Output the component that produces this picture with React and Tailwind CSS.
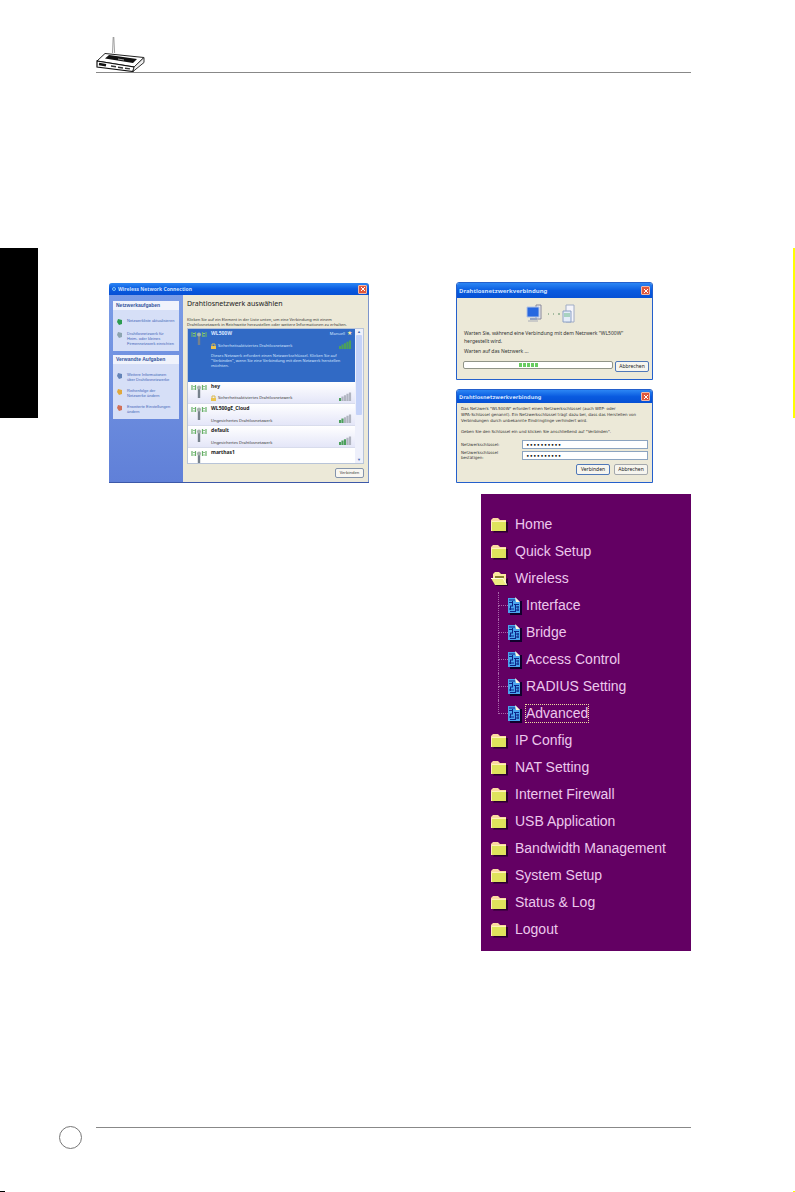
import { clsx } from "clsx";

const networks = [
  { name: "hey", info: "Sicherheitsaktiviertes Drahtlosnetzwerk", secure: true, level: 1 },
  { name: "WL500gE_Cloud", info: "Ungesichertes Drahtlosnetzwerk", level: 2 },
  { name: "default", info: "Ungesichertes Drahtlosnetzwerk", level: 3 },
];

const wirelessPages = ["Interface", "Bridge", "Access Control", "RADIUS Setting", "Advanced"];

const menuItems = [
  { label: "Home" },
  { label: "Quick Setup" },
  { label: "Wireless", children: wirelessPages },
  { label: "IP Config" },
  { label: "NAT Setting" },
  { label: "Internet Firewall" },
  { label: "USB Application" },
  { label: "Bandwidth Management" },
  { label: "System Setup" },
  { label: "Status & Log" },
  { label: "Logout" },
];

function RouterLogo() {
  return (
    <svg width="50" height="36" viewBox="0 0 50 36" className="block">
      <path d="M16.5 17 17.2 1M18.6 17 17.8 1" stroke="#777" strokeWidth="0.7" fill="none" />
      <path d="M1 25 9 17.5 48 21.5 38 31z" fill="#fff" stroke="#222" strokeWidth="1" />
      <path d="M1 25 38 31 37 35.5 1 31z" fill="#fff" stroke="#111" strokeWidth="1.2" />
      <path d="M38 31 48 21.5V26.5L37 35.5z" fill="#eee" stroke="#333" strokeWidth="1" />
      <path d="M9 22.5 13 19 41 23 37 27z" fill="#111" />
      <path d="M22 23l6 1" stroke="#ccc" strokeWidth="0.8" />
      <path d="M3 28l7 1.3" stroke="#111" strokeWidth="2.4" />
      <path d="M15 30l5 .8M22 31.2l5 .8M29 32.2l5 .7" stroke="#333" strokeWidth="1.4" />
    </svg>
  );
}

function FolderIcon({ open }) {
  if (open) {
    return (
      <svg width="17" height="16" viewBox="0 0 17 16" className="shrink-0">
        <path d="M4 15h13V7z" fill="#2b0030" />
        <path d="M2 9V3l2-2h4l2 2h5v10H5z" fill="#fbe9a0" />
        <path d="M4 5h9v2H4z" fill="#8a7c30" />
        <path d="M0 7h12l4 7H4z" fill="#eeec80" />
        <path d="M0 7.500h12l3.500 6" fill="none" stroke="#fffce0" />
      </svg>
    );
  }
  return (
    <svg width="17" height="16" viewBox="0 0 17 16" className="shrink-0">
      <path d="M2 15.500h15V5H9z" fill="#2b0030" />
      <path d="M0 14V3l2-2h5l2 2h6v11z" fill="#fbd9a0" />
      <path d="M1 4h14v10H1z" fill="#dfe35c" />
      <path d="M.5 14V4.500H15" fill="none" stroke="#fff2b8" />
    </svg>
  );
}

function PageIcon() {
  return (
    <svg width="14" height="18" viewBox="0 0 14 18" className="shrink-0">
      <path d="M2 4h12v14H2z" fill="#10002c" />
      <path d="M0 1h8l4 4v11H0z" fill="#4aa4ee" />
      <path d="M1 3h6M1 5.500h3M6 7.500h5M2 9h3M7 10h4M1 12h5M8 13h3M2 14.500h6M4.500 4v5M7.500 7v7M10 9v5M2.500 9v4" stroke="#0c2488" />
      <path d="M7 0l5 5H8z" fill="#fff8dc" />
    </svg>
  );
}

function Antenna() {
  return (
    <svg width="16" height="15" viewBox="0 0 16 15" className="shrink-0">
      <path d="M1 1v5M4.500 1v5M11.500 1v5M15 1v5" stroke="#68b068" strokeWidth="1.200" />
      <path d="M2 2.500h2M12 2.500h2M2 5h2M12 5h2" stroke="#8cc48c" />
      <path d="M8 4v10" stroke="#77828c" strokeWidth="2.400" />
      <circle cx="8" cy="3.500" r="2" fill="#a7b3ae" />
    </svg>
  );
}

function Signal({ level }) {
  return (
    <svg width="13" height="9" viewBox="0 0 13 9" className="shrink-0">
      {[0, 1, 2, 3, 4].map((n) => (
        <path key={n} d={`M${n * 2.5 + 1} 9V${6 - n * 1.4}`} stroke={n < level ? "#4ca05c" : "#b0b4c0"} strokeWidth="2.200" />
      ))}
    </svg>
  );
}

function Lock() {
  return (
    <svg width="5" height="6" viewBox="0 0 5 6" className="shrink-0">
      <path d="M1 3V1h3v2" fill="none" stroke="#d8b850" />
      <path d="M0 3h5v3H0z" fill="#ecc44c" />
    </svg>
  );
}

function TitleBar({ title, size = "text-[6px]", height = "h-[15px]", icon }) {
  return (
    <div
      className={clsx(
        "flex items-center justify-between bg-gradient-to-b from-[#2c86f4] via-[#0a5be0] to-[#0650d4] pr-[2px] pl-[2px] font-bold text-[#cfe2ff]",
        size,
        height
      )}
    >
      <span className="flex items-center gap-[2px] whitespace-nowrap">
        {icon && <span className="ml-px size-1 rounded-full border border-[#7fc4f4]" />}
        {title}
      </span>
      <button
        aria-label="Schließen"
        className="flex size-[9px] items-center justify-center rounded-[1px] border border-[#f0b8a8] bg-[#e0583c]"
      >
        <svg width="6" height="6" viewBox="0 0 6 6">
          <path d="M1 1l4 4M5 1l-4 4" stroke="#fff" />
        </svg>
      </button>
    </div>
  );
}

function DialogButton({ children, primary }) {
  return (
    <button
      className={clsx(
        "h-[11px] w-[34px] shrink-0 rounded-[2px] border bg-[#f6f5ef] text-center text-[5px] leading-[9px] text-[#222]",
        primary ? "border-[#5078b8]" : "border-[#a4a8ac]"
      )}
    >
      {children}
    </button>
  );
}

function TaskLink({ color, children }) {
  return (
    <li className="flex gap-1">
      <svg width="6" height="7" viewBox="0 0 6 7" className="shrink-0">
        <path d="M1 1l4 1v4l-3 1-2-3z" fill={color} />
      </svg>
      <a href="#" className="whitespace-nowrap text-[#4468b8]">{children}</a>
    </li>
  );
}

function TaskBox({ title, children }) {
  return (
    <section className="bg-[#d6dff7] font-['Liberation_Sans',sans-serif]">
      <h3 className="bg-[#f0f3fc] px-[3px] text-[5px] leading-[9px] font-bold text-[#34549c]">{title}</h3>
      <ul className="flex flex-col gap-[6px] px-1 pt-2 pb-[5px]">{children}</ul>
    </section>
  );
}

function NetworkWindow() {
  return (
    <section className="flex h-[200px] flex-col overflow-hidden rounded-t-[3px] border-b border-[#3c58a8] bg-[#ece9d8] text-[4px] leading-[5px] text-[#333]">
      <TitleBar icon size="text-[5px]" height="h-[12px]" title="Wireless Network Connection" />
      <div className="flex min-h-0 flex-1 border-r border-[#7d95cc]">
        <aside className="flex w-[74px] shrink-0 flex-col gap-1 bg-gradient-to-b from-[#7b9ce6] to-[#6080d8] px-1 pt-[6px]">
          <TaskBox title="Netzwerkaufgaben">
            <TaskLink color="#2c9c50">Netzwerkliste aktualisieren</TaskLink>
            <TaskLink color="#8ca4b0">
              Drahtlosnetzwerk für<br />Heim- oder kleines<br />Firmennetzwerk einrichten
            </TaskLink>
          </TaskBox>
          <TaskBox title="Verwandte Aufgaben">
            <TaskLink color="#6484b8">Weitere Informationen<br />über Drahtlosnetzwerke</TaskLink>
            <TaskLink color="#e0a83c">Reihenfolge der<br />Netzwerke ändern</TaskLink>
            <TaskLink color="#d07058">Erweiterte Einstellungen<br />ändern</TaskLink>
          </TaskBox>
        </aside>

        <div className="flex min-w-0 flex-1 flex-col pt-1 pr-1 pl-1">
          <h2 className="text-[7px] leading-[10px] whitespace-nowrap text-[#222]">Drahtlosnetzwerk auswählen</h2>
          <p className="pt-[8px] whitespace-nowrap">
            Klicken Sie auf ein Element in der Liste unten, um eine Verbindung mit einem
            <br />
            Drahtlosnetzwerk in Reichweite herzustellen oder weitere Informationen zu erhalten.
          </p>
          <div className="mt-px flex h-[136px] overflow-hidden border border-[#b8c4d8] bg-white">
            <ul className="min-w-0 flex-1">
              <li className="flex h-[53px] gap-1 bg-[#316ac5] px-[3px] pt-[2px] text-[#d8e6ff]">
                <Antenna />
                <div className="flex flex-1 flex-col">
                  <div className="flex justify-between">
                    <strong className="text-[5px]">WL500W</strong>
                    <span className="flex items-center gap-[2px]">
                      Manuell <span className="text-[6px] text-[#ffeaa0]">★</span>
                    </span>
                  </div>
                  <div className="flex items-end justify-between pt-[3px]">
                    <span className="flex gap-[2px] pt-1"><Lock />Sicherheitsaktiviertes Drahtlosnetzwerk</span>
                    <Signal level={5} />
                  </div>
                  <p className="pt-1 whitespace-nowrap">
                    Dieses Netzwerk erfordert einen Netzwerkschlüssel. Klicken Sie auf
                    <br />
                    "Verbinden", wenn Sie eine Verbindung mit dem Netzwerk herstellen
                    <br />
                    möchten.
                  </p>
                </div>
              </li>
              {networks.map((net) => (
                <li key={net.name} className="flex h-[22px] gap-1 border-b border-[#d8dcec] bg-gradient-to-b from-white to-[#e4e6f8] px-[3px] pt-[2px]">
                  <Antenna />
                  <div className="flex flex-1 flex-col justify-between pb-[2px]">
                    <strong className="text-[5px] text-[#222]">{net.name}</strong>
                    <div className="flex items-end justify-between">
                      <span className="flex gap-[2px]">{net.secure && <Lock />}{net.info}</span>
                      <Signal level={net.level} />
                    </div>
                  </div>
                </li>
              ))}
              <li className="flex gap-1 px-[3px] pt-[2px]">
                <Antenna />
                <strong className="text-[5px] text-[#222]">marthas1</strong>
              </li>
            </ul>
            <div className="flex w-[8px] flex-col items-center bg-[#eef0fb] text-[#4c6cb0]">
              <span className="leading-[6px]">▲</span>
              <span className="h-[80px] w-[6px] rounded-[1px] bg-[#c4d2f8]" />
              <span className="mt-auto leading-[6px]">▼</span>
            </div>
          </div>
          <div className="mt-1 flex justify-end">
            <button className="h-[10px] w-[29px] rounded-[2px] border border-[#8494ac] bg-[#f8f7f2] text-center leading-[8px]">Verbinden</button>
          </div>
        </div>
      </div>
    </section>
  );
}

function ConnectingDialog() {
  return (
    <section className="overflow-hidden rounded-t-[3px] border border-[#2460cc] bg-[#ece9d8] text-[5px] leading-[8px] text-[#333]">
      <TitleBar title="Drahtlosnetzwerkverbindung" />
      <div className="px-[3px] pb-[7px]">
        <div className="flex justify-center pt-[6px] pr-2">
          <svg width="52" height="19" viewBox="0 0 52 19">
            <path d="M11 1h5v14h-5z" fill="#e8e8ee" stroke="#889" />
            <path d="M2 3h12v10H2z" fill="#2868e0" stroke="#b4c4e4" />
            <path d="M5 14h7v2H5z" fill="#98a4c0" />
            <path d="M3 17h10" stroke="#a8acb8" />
            <path d="M23 10h1M28 10h1M33 10h2" stroke="#8cac8c" strokeWidth="1.500" />
            <path d="M41 1h8v17h-8z" fill="#f4f4fa" stroke="#a0acc4" />
            <path d="M38 7h8v11h-8z" fill="#e4ecf8" stroke="#8ca0c4" />
            <path d="M39 10h6M39 12h6" stroke="#6cb888" />
          </svg>
        </div>
        <p className="px-1 pt-[6px] whitespace-nowrap">
          Warten Sie, während eine Verbindung mit dem Netzwerk "WL500W"
          <br />
          hergestellt wird.
        </p>
        <p className="px-1 pt-[2px]">Warten auf das Netzwerk ...</p>
        <div className="flex gap-[2px] pt-[6px] pl-[3px]">
          <div role="progressbar" className="flex h-[8px] flex-1 justify-center gap-px rounded-[2px] border border-[#909488] bg-white p-px pr-5">
            {[1, 2, 3, 4, 5].map((n) => (
              <span key={n} className="w-[3px] bg-[#68cc60]" />
            ))}
          </div>
          <DialogButton primary>Abbrechen</DialogButton>
        </div>
      </div>
    </section>
  );
}

function KeyDialog() {
  const fieldStyle =
    "h-[9px] min-w-0 flex-1 border border-[#8ca4c0] bg-white px-[3px] text-[6px] leading-[7px] text-black";

  return (
    <section className="overflow-hidden rounded-t-[3px] border border-[#2460cc] bg-[#ece9d8] font-['DejaVu_Sans',sans-serif] text-[4px] leading-[6px] text-[#333]">
      <TitleBar size="text-[5px]" height="h-[13px]" title="Drahtlosnetzwerkverbindung" />
      <form className="px-1 pb-[7px]">
        <p className="pt-[3px] whitespace-nowrap">
          Das Netzwerk "WL500W" erfordert einen Netzwerkschlüssel (auch WEP- oder
          <br />
          WPA-Schlüssel genannt). Ein Netzwerkschlüssel trägt dazu bei, dass das Herstellen von
          <br />
          Verbindungen durch unbekannte Eindringlinge verhindert wird.
        </p>
        <p className="pt-[5px] whitespace-nowrap">
          Geben Sie den Schlüssel ein und klicken Sie anschließend auf "Verbinden".
        </p>
        <div className="flex items-center pt-[5px]">
          <label htmlFor="key" className="w-[61px]">Netzwerkschlüssel:</label>
          <input id="key" type="password" defaultValue="wl500gkey1" className={fieldStyle} />
        </div>
        <div className="flex items-center pt-px">
          <label htmlFor="key2" className="w-[61px] leading-[5px]">Netzwerkschlüssel<br />bestätigen:</label>
          <input id="key2" type="password" defaultValue="wl500gkey1" className={fieldStyle} />
        </div>
        <div className="flex justify-end gap-1 pt-1 font-['Noto_Sans',sans-serif]">
          <DialogButton primary>Verbinden</DialogButton>
          <DialogButton>Abbrechen</DialogButton>
        </div>
      </form>
    </section>
  );
}

function RouterMenu() {
  return (
    <nav className="bg-[#630063] pt-[17px] pb-2 pl-[10px] font-['Liberation_Sans',sans-serif] text-[14px] text-[#ecc8ec]">
      <ul>
        {menuItems.map((item) => (
          <li key={item.label}>
            <a href="#" className="flex h-[27px] items-center gap-[7px]">
              <FolderIcon open={!!item.children} />
              {item.label}
            </a>
            {item.children && (
              <ul className="pl-[7px]">
                {item.children.map((page, i) => {
                  const last = i === item.children.length - 1;
                  return (
                    <li key={page} className="flex h-[27px] items-center">
                      {/* tree lines */}
                      <span className="flex h-full w-[10px] flex-col">
                        <span className="h-[14px] border-b border-l border-dotted border-[#a868a8]" />
                        {!last && <span className="flex-1 border-l border-dotted border-[#a868a8]" />}
                      </span>
                      <PageIcon />
                      <a
                        href="#"
                        className={clsx(
                          "ml-[3px] border border-dotted leading-[17px]",
                          last ? "border-[#f0e0a0]" : "border-transparent"
                        )}
                      >
                        {page}
                      </a>
                    </li>
                  );
                })}
              </ul>
            )}
          </li>
        ))}
      </ul>
    </nav>
  );
}

export default function App() {
  return (
    <div className="flex min-h-screen flex-col bg-white font-['Noto_Sans',sans-serif]">
      <header className="mr-26 ml-24 border-b border-[#888] pt-9">
        <RouterLogo />
      </header>

      <main className="mt-[175px] flex items-start">
        <div className="h-[170px] w-[38px] shrink-0 bg-black" />
        <div className="mr-[102px] ml-[71px] grid flex-1 grid-cols-[260fr_87fr_235fr] items-start pt-[34px]">
          <div className="pt-px">
            <NetworkWindow />
          </div>
          <div className="col-start-3 flex flex-col">
            <div className="mr-[38px] flex flex-col gap-[9px]">
              <ConnectingDialog />
              <KeyDialog />
            </div>
            <div className="mt-[11px] ml-[25px]">
              <RouterMenu />
            </div>
          </div>
        </div>
        <div className="h-[170px] w-[2px] shrink-0 bg-[#ffff00]" />
      </main>

      <footer className="mt-auto mr-26 mb-[42px] ml-[59px] flex gap-[14px]">
        <span className="size-[23px] shrink-0 rounded-full border border-[#777]" />
        <span className="mt-px flex-1 border-t border-[#888]" />
      </footer>
      <div className="flex h-px justify-between">
        <span className="w-[5px] bg-black" />
        <span className="w-[2px] bg-[#ffff00]" />
      </div>
    </div>
  );
}
